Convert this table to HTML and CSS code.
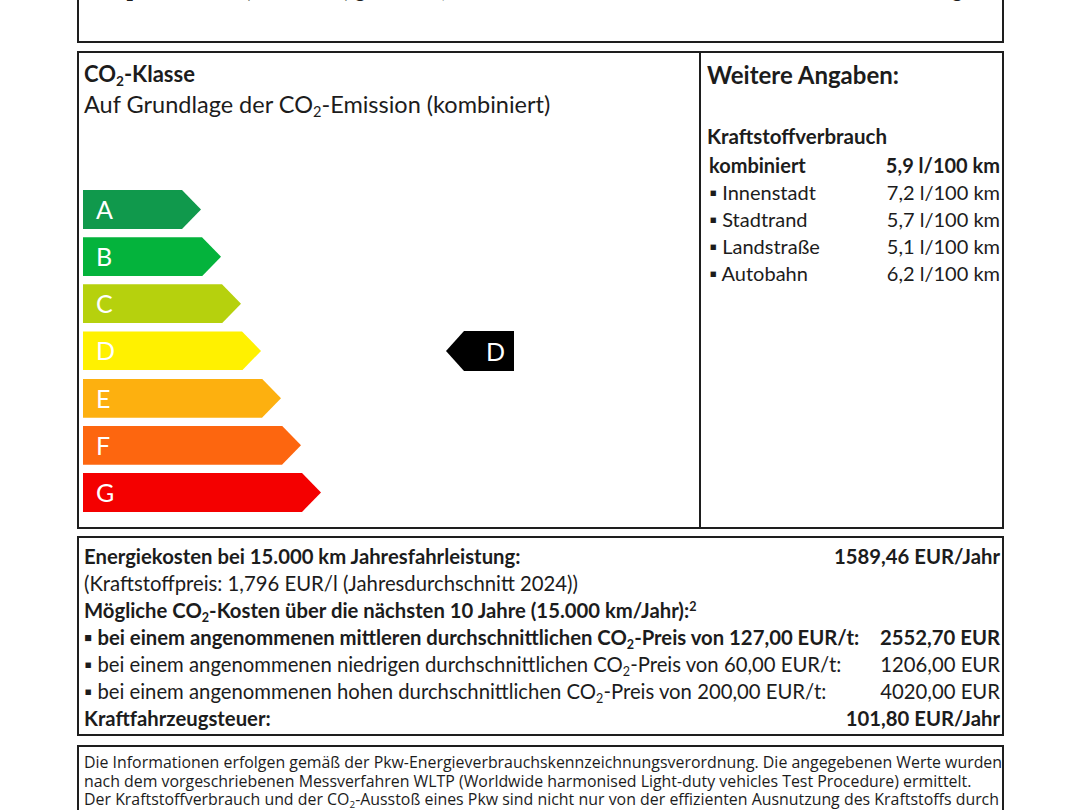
FILE: index.html
```html
<!DOCTYPE html>
<html lang="de">
<head>
<meta charset="utf-8">
<title>Pkw-Label</title>
<link rel="stylesheet" href="styles.css">
</head>
<body>
<div class="page">
  <section class="box box-top">
    <div class="row">
      <span>▪ CO<sub class="sub">2</sub>-Emissionen (kombiniert) gewichtet, kombiniert</span>
      <span>g/km</span>
    </div>
  </section>

  <section class="box box-class">
    <div class="left">
      <div class="h-bold">CO<sub class="sub">2</sub>-Klasse</div>
      <div class="h-reg">Auf Grundlage der CO<sub class="sub">2</sub>-Emission (kombiniert)</div>
      <div class="scale">
        <div class="scale-row"><div class="arrow a" style="width:118px">A</div></div>
        <div class="scale-row"><div class="arrow b" style="width:138px">B</div></div>
        <div class="scale-row"><div class="arrow c" style="width:158px">C</div></div>
        <div class="scale-row"><div class="arrow d" style="width:178px">D</div><div class="marker">D</div></div>
        <div class="scale-row"><div class="arrow e" style="width:198px">E</div></div>
        <div class="scale-row"><div class="arrow f" style="width:218px">F</div></div>
        <div class="scale-row"><div class="arrow g" style="width:238px">G</div></div>
      </div>
    </div>
    <div class="right">
      <div class="h-bold h-right">Weitere Angaben:</div>
      <div class="sub-title">Kraftstoffverbrauch</div>
      <div class="cons-row bold"><span>kombiniert</span><span>5,9 l/100 km</span></div>
      <div class="cons-row"><span>▪ Innenstadt</span><span>7,2 l/100 km</span></div>
      <div class="cons-row"><span>▪ Stadtrand</span><span>5,7 l/100 km</span></div>
      <div class="cons-row"><span>▪ Landstraße</span><span>5,1 l/100 km</span></div>
      <div class="cons-row"><span>▪ Autobahn</span><span>6,2 l/100 km</span></div>
    </div>
  </section>

  <section class="box box-costs">
    <div class="row bold"><span>Energiekosten bei 15.000 km Jahresfahrleistung:</span><span>1589,46 EUR/Jahr</span></div>
    <div class="row"><span>(Kraftstoffpreis: 1,796 EUR/l (Jahresdurchschnitt 2024))</span></div>
    <div class="row bold"><span>Mögliche CO<sub class="sub">2</sub>-Kosten über die nächsten 10 Jahre (15.000 km/Jahr):<sup class="sup">2</sup></span></div>
    <div class="row bold"><span>▪ bei einem angenommenen mittleren durchschnittlichen CO<sub class="sub">2</sub>-Preis von 127,00 EUR/t:</span><span>2552,70 EUR</span></div>
    <div class="row"><span>▪ bei einem angenommenen niedrigen durchschnittlichen CO<sub class="sub">2</sub>-Preis von 60,00 EUR/t:</span><span>1206,00 EUR</span></div>
    <div class="row"><span>▪ bei einem angenommenen hohen durchschnittlichen CO<sub class="sub">2</sub>-Preis von 200,00 EUR/t:</span><span>4020,00 EUR</span></div>
    <div class="row bold"><span>Kraftfahrzeugsteuer:</span><span>101,80 EUR/Jahr</span></div>
  </section>

  <section class="box box-note">
    <p class="line just">Die Informationen erfolgen gemäß der Pkw-Energieverbrauchskennzeichnungsverordnung. Die angegebenen Werte wurden</p>
    <p class="line">nach dem vorgeschriebenen Messverfahren WLTP (Worldwide harmonised Light-duty vehicles Test Procedure) ermittelt.</p>
    <p class="line just">Der Kraftstoffverbrauch und der CO<sub class="sub">2</sub>-Ausstoß eines Pkw sind nicht nur von der effizienten Ausnutzung des Kraftstoffs durch</p>
    <p class="line">den Pkw abhängig, sondern werden auch vom Fahrstil und anderen nichttechnischen Faktoren beeinflusst.</p>
  </section>
</div>
</body>
</html>
```
FILE: styles.css
```css
* { box-sizing: border-box; }
html, body { margin: 0; padding: 0; background: #fff; overflow: hidden; }
body {
  font-family: "Lato", "Open Sans", "DejaVu Sans", sans-serif;
  color: #1c1c1c;
  width: 1080px;
  height: 810px;
}
.page {
  margin-left: 77px;
  width: 927px;
}
.box {
  border: 2px solid #1e1e1e;
}
.sub {
  font-size: 0.62em;
  vertical-align: -0.28em;
  line-height: 0;
}
.sup {
  font-size: 0.62em;
  vertical-align: 0.55em;
  line-height: 0;
}
.bold { font-weight: 700; }

.box-top {
  margin-top: -61px;
  height: 104px;
  padding: 36px 4px 0 5px;
  font-size: 20px;
}
.box-top .row { display: flex; justify-content: space-between; line-height: 27px; }

.box-class {
  margin-top: 8px;
  height: 478px;
  display: grid;
  grid-template-columns: 620px 1fr;
}
.left {
  padding: 6px 0 0 5px;
}
.h-bold {
  font-size: 22px;
  font-weight: 700;
  line-height: 30px;
}
.h-right {
  font-size: 24px;
}
.h-reg {
  font-size: 23.5px;
  line-height: 30px;
}
.scale {
  margin-top: 71px;
  display: flex;
  flex-direction: column;
  gap: 8.17px;
}
.scale-row {
  display: flex;
  align-items: center;
  height: 39px;
}
.arrow {
  height: 39px;
  clip-path: polygon(0 0, calc(100% - 19px) 0, 100% 50%, calc(100% - 19px) 100%, 0 100%);
  color: #fff;
  font-size: 25px;
  line-height: 39px;
  padding-left: 13px;
  margin-left: -1px;
}
.a { background: #10994c; }
.b { background: #04b33c; }
.c { background: #b6d10d; }
.d { background: #fff100; }
.e { background: #fdb00f; }
.f { background: #fd660f; }
.g { background: #f40000; }
.marker {
  margin-left: 185px;
  width: 68px;
  height: 40px;
  background: #000;
  color: #fff;
  clip-path: polygon(18px 0, 100% 0, 100% 100%, 18px 100%, 0 50%);
  font-size: 25px;
  line-height: 40px;
  text-align: right;
  padding-right: 9px;
}

.right {
  border-left: 2px solid #1e1e1e;
  padding: 7px 2px 0 6px;
}
.sub-title {
  margin-top: 33px;
  margin-bottom: 2px;
  font-size: 20.5px;
  font-weight: 700;
  line-height: 27px;
}
.cons-row {
  display: flex;
  justify-content: space-between;
  font-size: 20px;
  line-height: 27px;
  padding-left: 2px;
}

.box-costs {
  margin-top: 7px;
  height: 200px;
  padding: 5px 2px 0 5px;
  font-size: 20.3px;
}
.box-costs .row {
  display: flex;
  justify-content: space-between;
  line-height: 27px;
  white-space: nowrap;
}

.box-note {
  margin-top: 9px;
  padding: 6px 3px 0 5px;
  font-family: "Open Sans", "Lato", sans-serif;
  font-size: 15.9px;
  height: 120px;
}
.line {
  margin: 0;
  line-height: 18.5px;
  white-space: nowrap;
}
.just {
  text-align: justify;
  text-align-last: justify;
}
```
